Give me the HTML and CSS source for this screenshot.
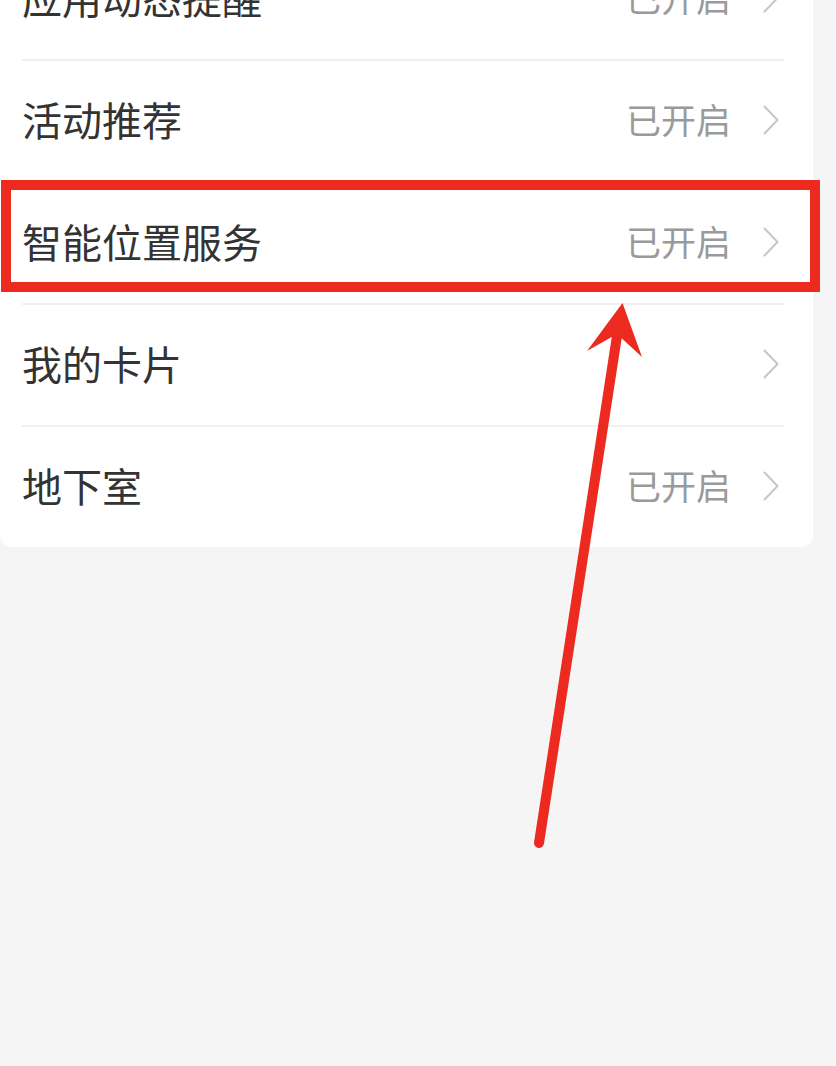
FILE: index.html
```html
<!DOCTYPE html>
<html lang="zh-CN">
<head>
<meta charset="utf-8">
<title>设置</title>
<link rel="stylesheet" href="styles.css">
</head>
<body>
<div class="page">
  <div class="card">
    <div class="row">
      <span class="label">应用动态提醒</span>
      <span class="right"><span class="status">已开启</span><svg class="chev" viewBox="0 0 16 30"><path d="M1.5 1.5 L14.5 15 L1.5 28.5" /></svg></span>
    </div>
    <div class="row">
      <span class="label">活动推荐</span>
      <span class="right"><span class="status">已开启</span><svg class="chev" viewBox="0 0 16 30"><path d="M1.5 1.5 L14.5 15 L1.5 28.5" /></svg></span>
    </div>
    <div class="row">
      <span class="label">智能位置服务</span>
      <span class="right"><span class="status">已开启</span><svg class="chev" viewBox="0 0 16 30"><path d="M1.5 1.5 L14.5 15 L1.5 28.5" /></svg></span>
    </div>
    <div class="row">
      <span class="label">我的卡片</span>
      <span class="right"><svg class="chev" viewBox="0 0 16 30"><path d="M1.5 1.5 L14.5 15 L1.5 28.5" /></svg></span>
    </div>
    <div class="row">
      <span class="label">地下室</span>
      <span class="right"><span class="status">已开启</span><svg class="chev" viewBox="0 0 16 30"><path d="M1.5 1.5 L14.5 15 L1.5 28.5" /></svg></span>
    </div>
  </div>
  <div class="highlight"></div>
  <svg class="arrow" viewBox="0 0 836 1066" width="836" height="1066">
    <line x1="539" y1="843" x2="617" y2="336" />
    <polygon points="622.5,303 642,357 617,334 587,351" />
  </svg>
</div>
</body>
</html>
```

FILE: styles.css
```css
html, body {
  margin: 0;
  padding: 0;
}
body {
  background: #f5f5f5;
  font-family: "Noto Sans CJK SC", "Noto Sans", sans-serif;
  overflow: hidden;
}
.page {
  position: relative;
  width: 836px;
  height: 1066px;
  overflow: hidden;
}
.card {
  margin-top: -61px;
  width: 813px;
  background: #ffffff;
  border-radius: 0 0 12px 12px;
  padding: 0 29px 0 22px;
  box-sizing: border-box;
}
.row {
  display: flex;
  align-items: center;
  justify-content: space-between;
  height: 122px;
  padding-bottom: 5px;
  box-sizing: border-box;
  border-bottom: 2px solid #f0f0f0;
}
.row:last-child {
  border-bottom: none;
  height: 120px;
}
.label {
  font-size: 40px;
  line-height: 1;
  color: #333333;
}
.right {
  display: flex;
  align-items: center;
  gap: 32px;
  padding-right: 5px;
}
.status {
  font-size: 35px;
  line-height: 1;
  color: #9a9a9a;
}
.chev {
  width: 16px;
  height: 30px;
  margin-top: 3px;
  fill: none;
  stroke: #c6c6c6;
  stroke-width: 2;
  stroke-linejoin: round;
  stroke-linecap: round;
}
.highlight {
  position: absolute;
  left: 1px;
  top: 180px;
  width: 819px;
  height: 112px;
  box-sizing: border-box;
  border: 10px solid #ec2a20;
}
.arrow {
  position: absolute;
  left: 0;
  top: 0;
}
.arrow line {
  stroke: #ec2a20;
  stroke-width: 10;
  stroke-linecap: round;
}
.arrow polygon {
  fill: #ec2a20;
}
```
